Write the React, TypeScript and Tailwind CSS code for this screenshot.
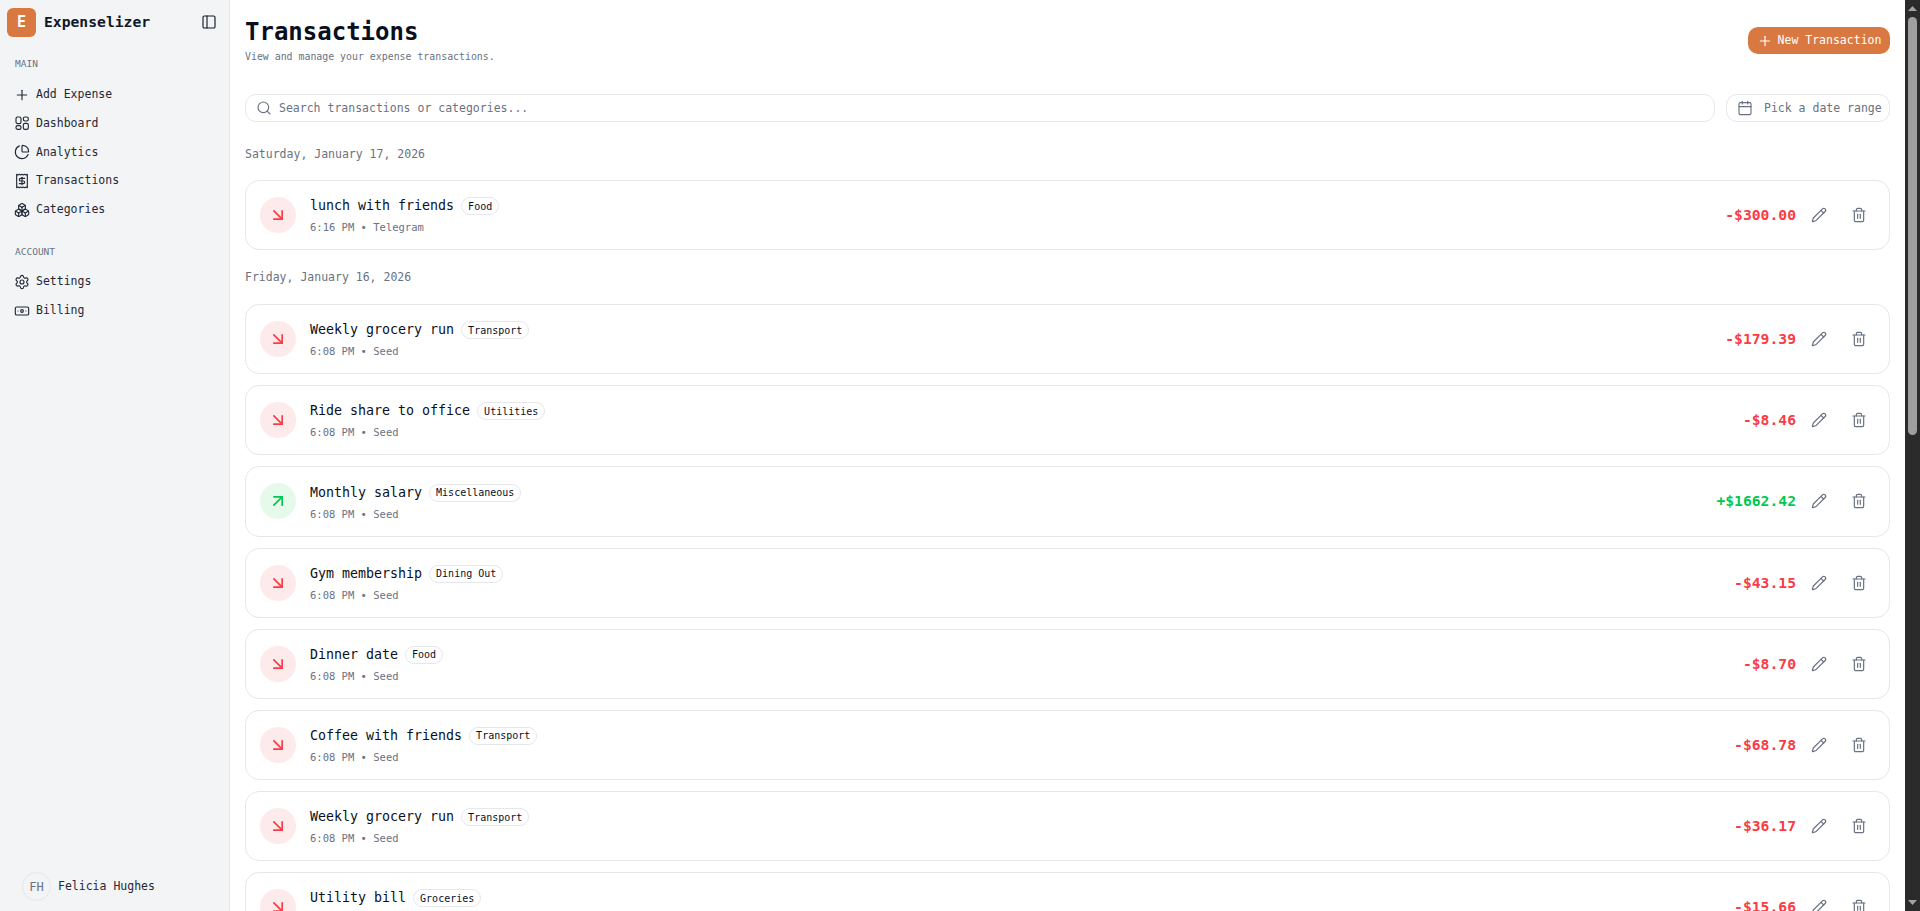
import React from "react";
import { Plus, ChartPie, Receipt, Boxes, Settings, Banknote, PanelLeft, Search, Calendar, Pencil, Trash2, ArrowDownRight, ArrowUpRight } from "lucide-react";

const mono = "font-['DejaVu_Sans_Mono','Liberation_Mono',monospace]";
const DashIcon = ({ size = 16, strokeWidth = 1.7 }: { size?: number; strokeWidth?: number }) => (
  <svg width={size} height={size} viewBox="0 0 24 24" fill="none" stroke="currentColor" strokeWidth={strokeWidth}>
    <rect x="3" y="3" width="7.5" height="10" rx="2.5" />
    <rect x="14" y="3" width="7.5" height="6" rx="2.5" />
    <rect x="14" y="12.5" width="7.5" height="9" rx="2.5" />
    <rect x="3" y="16" width="7.5" height="5.5" rx="2.5" />
  </svg>
);
const NavItem = ({ icon: I, label }: { icon: any; label: string }) => (
  <div className="flex items-center h-[28.8px] px-[14px] gap-[6px] text-[#1f2937] text-[11.5px]">
    <I size={16} strokeWidth={1.7} />
    <span>{label}</span>
  </div>
);
type T = { t: string; c: string; time: string; src: string; a: string; up?: boolean };
const Row = ({ t, c, time, src, a, up }: T) => (
  <div className="flex items-center h-[70.14px] border border-[#e5e7eb] rounded-[14px] pl-[14px] pr-[22px] shrink-0">
    <div className={`w-9 h-9 rounded-full flex items-center justify-center ${up ? "bg-[#e6faec] text-[#00c950]" : "bg-[#fdeaea] text-[#fb3b45]"}`}>
      {up ? <ArrowUpRight size={20} /> : <ArrowDownRight size={20} />}
    </div>
    <div className="ml-[14px] pt-[2px]">
      <div className="flex items-center gap-[7px]">
        <span className="text-[13.3px] text-[#0a0f1e]">{t}</span>
        <span className="border border-[#e5e7eb] rounded-full px-[6px] h-[18px] flex items-center text-[10px] text-[#0a0f1e]">{c}</span>
      </div>
      <div className="text-[10.5px] text-[#6a7282] mt-[4px]">{time} • {src}</div>
    </div>
    <div className={`ml-auto font-bold text-[14.7px] ${up ? "text-[#00c950]" : "text-[#fb3b45]"}`}>{a}</div>
    <Pencil size={16} strokeWidth={1.8} className="ml-[15px] text-[#6a7282]" />
    <Trash2 size={16} strokeWidth={1.8} className="ml-[24px] text-[#6a7282]" />
  </div>
);
const rows: T[] = [
  { t: "Weekly grocery run", c: "Transport", time: "6:08 PM", src: "Seed", a: "-$179.39" },
  { t: "Ride share to office", c: "Utilities", time: "6:08 PM", src: "Seed", a: "-$8.46" },
  { t: "Monthly salary", c: "Miscellaneous", time: "6:08 PM", src: "Seed", a: "+$1662.42", up: true },
  { t: "Gym membership", c: "Dining Out", time: "6:08 PM", src: "Seed", a: "-$43.15" },
  { t: "Dinner date", c: "Food", time: "6:08 PM", src: "Seed", a: "-$8.70" },
  { t: "Coffee with friends", c: "Transport", time: "6:08 PM", src: "Seed", a: "-$68.78" },
  { t: "Weekly grocery run", c: "Transport", time: "6:08 PM", src: "Seed", a: "-$36.17" },
  { t: "Utility bill", c: "Groceries", time: "6:08 PM", src: "Seed", a: "-$15.66" },
];
export default function App() {
  return (
    <div className={`flex h-[911px] overflow-hidden bg-white ${mono}`}>
      <aside className="w-[230px] shrink-0 bg-[#f3f4f6] border-r border-[#e5e7eb] flex flex-col">
        <div className="flex items-center h-[42px] pl-[7px] pr-[12px] pt-[2px]">
          <div className="w-[29px] h-[29px] rounded-[6px] bg-[#d97941] text-white font-bold text-[15px] flex items-center justify-center">E</div>
          <span className="ml-[8px] font-bold text-[14.7px] text-[#101828]">Expenselizer</span>
          <PanelLeft size={16} strokeWidth={1.7} className="ml-auto text-[#101828]" />
        </div>
        <div className="text-[9.5px] text-[#6a7282] px-[15px] mt-[15px] mb-[9px]">MAIN</div>
        <NavItem icon={Plus} label="Add Expense" />
        <NavItem icon={DashIcon} label="Dashboard" />
        <NavItem icon={ChartPie} label="Analytics" />
        <NavItem icon={Receipt} label="Transactions" />
        <NavItem icon={Boxes} label="Categories" />
        <div className="text-[9.5px] text-[#6a7282] px-[15px] mt-[21px] mb-[8px]">ACCOUNT</div>
        <NavItem icon={Settings} label="Settings" />
        <NavItem icon={Banknote} label="Billing" />
        <div className="mt-auto flex items-center gap-[7px] pl-[22px] mb-[10px]">
          <div className="w-[29px] h-[29px] rounded-full border border-[#e5e7eb] flex items-center justify-center text-[12px] text-[#6a7282]">FH</div>
          <span className="text-[11.5px] text-[#1f2937]">Felicia Hughes</span>
        </div>
      </aside>
      <main className="flex-1 min-w-0 px-[15px] flex flex-col overflow-hidden">
        <div className="flex justify-between items-start pt-[16px] pb-[30px]">
          <div>
            <h1 className="text-[24px] leading-[32px] font-bold text-[#0a0f1e]">Transactions</h1>
            <p className="text-[9.9px] leading-[15px] text-[#6a7282] mt-[1px]">View and manage your expense transactions.</p>
          </div>
          <button className="mt-[11px] h-[27px] w-[142px] rounded-[10px] bg-[#d97941] text-white text-[11.5px] flex items-center justify-center gap-[5px]">
            <Plus size={16} strokeWidth={1.7} /> New Transaction
          </button>
        </div>
        <div className="flex gap-[11px]">
          <div className="flex-1 h-[28px] border border-[#e5e7eb] rounded-[11px] flex items-center pl-[10px] gap-[7px] text-[11.5px] text-[#6a7282]">
            <Search size={16} strokeWidth={1.7} /> <span className="pt-[1px]">Search transactions or categories...</span>
          </div>
          <div className="w-[164px] h-[28px] border border-[#e5e7eb] rounded-[11px] flex items-center pl-[10px] gap-[11px] text-[11.5px] text-[#6a7282]">
            <Calendar size={16} strokeWidth={1.7} /> <span className="pt-[1px]">Pick a date range</span>
          </div>
        </div>
        <div className="text-[11.5px] leading-[17px] text-[#6a7282] mt-[24px] mb-[17px]">Saturday, January 17, 2026</div>
        <Row t="lunch with friends" c="Food" time="6:16 PM" src="Telegram" a="-$300.00" />
        <div className="text-[11.5px] leading-[17px] text-[#6a7282] mt-[19px] mb-[18px]">Friday, January 16, 2026</div>
        <div className="flex flex-col gap-[11px]">
          {rows.map((r, i) => <Row key={i} {...r} />)}
        </div>
      </main>
      <div className="w-[15px] shrink-0 bg-[#2b2b2b] flex flex-col items-center">
        <svg width="15" height="17" viewBox="0 0 15 17" className="shrink-0"><path d="M3 11 L7.5 6 L12 11 Z" fill="#a3a3a3" /></svg>
        <div className="w-[9px] h-[418px] rounded-[5px] bg-[#9f9f9f]" />
        <svg width="15" height="17" viewBox="0 0 15 17" className="mt-auto shrink-0"><path d="M3 6 L7.5 11 L12 6 Z" fill="#a3a3a3" /></svg>
      </div>
    </div>
  );
}
